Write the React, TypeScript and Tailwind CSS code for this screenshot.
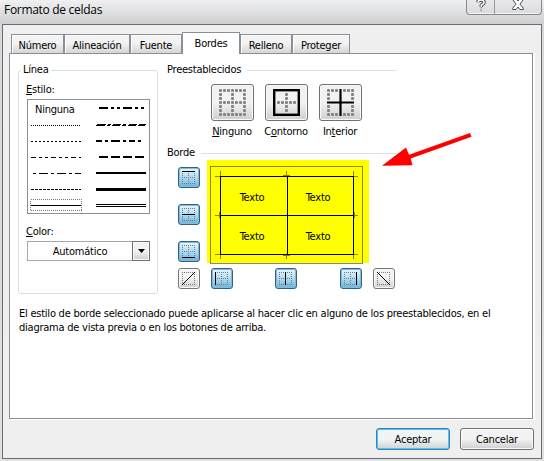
import type { ReactNode } from "react";

const uiFont = "font-['DejaVu_Sans_Condensed','DejaVu_Sans',sans-serif] [font-stretch:condensed] tracking-[-0.235px]";

function Tab({ label, width, active = false }: { label: string; width: string; active?: boolean }) {
  return (
    <div
      className={`${width} flex shrink-0 justify-center border border-b-0 border-[#8b8e99] ${
        active ? "h-[22px] bg-white pt-[4px]" : "mb-px h-[19px] bg-linear-to-b from-[#f3f3f3] from-45% to-[#d5d5d5] pt-[4px] shadow-[inset_1px_1px_0_#fff]"
      }`}
    >
      {label}
    </div>
  );
}

type Kind = "none" | "outline" | "inside";

function PresetIcon({ kind }: { kind: Kind }) {
  const dots: ReactNode[] = [];
  for (let r = 0; r < 7; r++) {
    for (let c = 0; c < 7; c++) {
      const edge = r === 0 || r === 6 || c === 0 || c === 6;
      const mid = r === 3 || c === 3;
      const show = kind === "none" ? edge || mid : kind === "outline" ? mid && !edge : edge && !mid;
      if (show) dots.push(<rect key={`${r}-${c}`} x={c * 4 + 1} y={r * 4 + 1} width="3" height="3" rx="1" fill="#858585" />);
    }
  }
  return (
    <svg width="29" height="29" viewBox="0 0 29 29">
      {dots}
      {kind === "outline" && <rect x="2.2" y="2.2" width="24.6" height="24.6" fill="none" stroke="#000" strokeWidth="2.4" />}
      {kind === "inside" && <path d="M14.5 1v27M1 14.5h27" stroke="#000" strokeWidth="2.2" />}
    </svg>
  );
}

function Preset({ kind, children }: { kind: Kind; children: ReactNode }) {
  return (
    <div className="flex w-[54px] flex-col items-center">
      <div className="flex h-[37px] w-[43px] items-center justify-center rounded-[3px] border border-[#707070] bg-linear-to-b from-[#f2f2f2] from-50% to-[#cfcfcf] shadow-[inset_0_0_0_1px_#fafafa]">
        <PresetIcon kind={kind} />
      </div>
      <span className="mt-[4px] whitespace-nowrap">{children}</span>
    </div>
  );
}

function SideButton({ line, blue = true }: { line: string; blue?: boolean }) {
  return (
    <div
      className={`flex h-[21px] w-[22px] shrink-0 items-center justify-center rounded-[3px] border ${
        blue
          ? "border-[#2c628b] bg-linear-to-b from-[#e1f2fb] from-10% via-[#a9d7ef] via-55% to-[#68b3db] shadow-[inset_0_0_0_1px_#8fb8d0]"
          : "border-[#777] bg-linear-to-b from-[#f4f4f4] from-45% to-[#cfcfcf] shadow-[inset_0_0_0_1px_#fafafa]"
      }`}
    >
      <svg width="14" height="13" viewBox="0 0 14 13" shapeRendering="crispEdges">
        <path
          d={blue ? "M0 .5h13M0 6.5h13M0 12.5h13M.5 0v13M6.5 0v13M12.5 0v13" : "M0 .5h13M0 12.5h13M.5 0v13M12.5 0v13"}
          stroke="#737b82"
          strokeDasharray="1 1"
        />
        <path d={line} stroke="#000" strokeWidth="1" shapeRendering={blue ? "crispEdges" : "auto"} />
      </svg>
    </div>
  );
}

function LineStyles() {
  return (
    <svg width="120" height="113" viewBox="28 100 120 113" shapeRendering="crispEdges" stroke="#000">
      <path d="M31 125.5h50" strokeDasharray="1 1" />
      <path d="M31 141.5h50" strokeDasharray="2 2" />
      <path d="M31 157.5h50" strokeDasharray="5 3 3 3 3 3" />
      <path d="M33 173.5h48" strokeDasharray="3 3 9 3" />
      <path d="M31 189.5h50" strokeDasharray="3 1" />
      <path d="M31 205.5h50" />
      <path d="M99 108h46" strokeWidth="2" strokeDasharray="9 3 3 3 3 3" />
      <path d="M96 125.5h9M107 125.5h3M112 125.5h8M122 125.5h4M128 125.5h8M138 125.5h7" />
      <path d="M97 124.5h9M108 124.5h3M113 124.5h8M123 124.5h3M129 124.5h8M139 124.5h7" />
      <path d="M96 141h48" strokeWidth="2" strokeDasharray="6 3 3 3 9 3 3 3" />
      <path d="M99 157h45" strokeWidth="2" strokeDasharray="9 3" />
      <path d="M96 173h50" strokeWidth="2" />
      <path d="M96 189.5h50" strokeWidth="3" />
      <path d="M96 204.5h50M96 206.5h50" />
      <rect x="30.5" y="199.5" width="51" height="11" fill="none" stroke="#777" strokeDasharray="1 1" />
    </svg>
  );
}

function Preview() {
  return (
    <div className="relative h-[103px] w-[162px] bg-[#ff0]">
      <svg className="absolute inset-0" width="162" height="103" viewBox="207 160 162 103" shapeRendering="crispEdges" fill="none">
        <path d="M210.500 263V166.500h152V263" stroke="#878700" />
        <path
          d="M215 176.5h5M220.5 171v5M215 215.5h5M219.5 212v6M215 254.5h5M220.5 254v5M283 175.5h7M286.5 171v5M283 255.5h7M286.5 254v5M353 176.5h5M353.5 171v5M354 215.5h4M354.5 212v6M353 254.5h5M353.5 254v5"
          stroke="#878700"
        />
        <path d="M220 176.5h134M220 215.5h134M220 254.5h134M220.5 176v79M287.5 176v79M353.5 176v79" stroke="#000" />
      </svg>
      <div className="relative grid h-full grid-cols-[66px_66px] grid-rows-[39px_39px] place-items-center pt-[18px] pl-[12px]">
        <span>Texto</span>
        <span>Texto</span>
        <span>Texto</span>
        <span>Texto</span>
      </div>
      <div className="absolute top-[103px] left-[3px] h-px w-[153px] bg-[#85878d]" />
    </div>
  );
}

function Heading({ children }: { children: ReactNode }) {
  return (
    <div className="flex h-[14px] w-[229px] items-center gap-[6px]">
      <span>{children}</span>
      <div className="h-px flex-1 bg-[#d5dfe5]" />
    </div>
  );
}

export default function App() {
  return (
    <div className={`relative flex h-[461px] w-[544px] flex-col overflow-hidden bg-linear-to-b from-[#d6d7d9] to-[#e0e0e0] text-[11px] leading-[14px] text-black ${uiFont}`}>
      <header className="flex h-[24px] shrink-0 justify-between bg-linear-to-b from-[#f0f0f1] via-[#dfe0e2] via-50% to-[#cbcdcf]">
        <h1 className="ml-[4px] font-['Open_Sans','Noto_Sans',sans-serif] text-[12px] leading-[20px] tracking-[-0.3px] [font-stretch:normal]">Formato de celdas</h1>
        <div className="mr-[2px] flex h-[15px] w-[76px] rounded-b-[4px] border border-t-0 border-[#84868a] bg-linear-to-b from-[#e9e9ea] to-[#d9dadc] shadow-[inset_0_-1px_0_#f5f5f5]">
          <div className="flex w-[28px] justify-center border-r border-[#999]">
            <svg width="12" height="12" viewBox="0 0 12 12" fill="none" strokeLinejoin="round">
              <path d="M3 2.200Q3 0 6 0T9 2.200Q9 4 6.300 5V7M5.700 9h1.200" stroke="#4a4d5c" strokeWidth="3.400" />
              <path d="M3 2.200Q3 0 6 0T9 2.200Q9 4 6.300 5V7M5.700 9h1.200" stroke="#fff" strokeWidth="1.500" />
            </svg>
          </div>
          <div className="flex flex-1 justify-center">
            <svg width="12" height="11" viewBox="0 0 12 11" fill="none">
              <path d="M.7-1.500h3.200L6 1 8.100-1.500h3.200v1L8 4.200l3.300 4v1.300H8L6 7 4 9.500H.700V8.200L4 4.200.700-.500z" fill="#fff" stroke="#4a4d5c" />
            </svg>
          </div>
        </div>
      </header>

      <main className="ml-[2px] flex h-[435px] w-[540px] shrink-0 flex-col border border-[#696b6e] bg-[#efefef]">
        <nav className="z-10 flex h-[29px] items-end pl-[8px]">
          <Tab label="Número" width="w-[53px]" />
          <Tab label="Alineación" width="w-[66px]" />
          <Tab label="Fuente" width="w-[52px]" />
          <Tab label="Bordes" width="w-[58px]" active />
          <Tab label="Relleno" width="w-[52px]" />
          <Tab label="Proteger" width="w-[58px]" />
        </nav>

        <section className="-mt-px ml-[6px] h-[366px] w-[524px] shrink-0 border border-[#8b8e99] bg-white shadow-[2px_1px_0_#fff]">
          <div className="flex h-[240px]">
            <fieldset className="mt-[9px] ml-[8px] h-[231px] w-[140px] rounded-[3px] border border-[#d5dfe5] pl-[8px]">
              <legend className="-ml-[6px] px-[2px]">Línea</legend>
              <p className="-ml-px mt-[6px]"><u>E</u>stilo:</p>
              <div className="relative mt-[2px] h-[115px] w-[123px] border border-[#8b8e99]">
                <LineStyles />
                <span className="absolute top-[3px] left-[7px]">Ninguna</span>
              </div>
              <p className="-ml-px mt-[11px]"><u>C</u>olor:</p>
              <div className="mt-[2px] flex h-[20px] w-[123px] border border-[#a5a7ad]">
                <span className="flex-1 pt-[3px] text-center">Automático</span>
                <div className="-my-px -mr-px flex w-[18px] items-center justify-center border border-[#707070] bg-linear-to-b from-[#f2f2f2] from-50% to-[#cfcfcf] shadow-[inset_0_0_0_1px_#fafafa]">
                  <svg width="7" height="4" viewBox="0 0 7 4"><path d="M0 0h7L3.500 4z" /></svg>
                </div>
              </div>
            </fieldset>

            <div className="ml-[9px] flex w-[229px] flex-col pt-[9px]">
              <Heading>Preestablecidos</Heading>
              <div className="mt-[7px] ml-[38px] flex">
                <Preset kind="none"><u>N</u>inguno</Preset>
                <Preset kind="outline">C<u>o</u>ntorno</Preset>
                <Preset kind="inside">In<u>t</u>erior</Preset>
              </div>
              <div className="mt-[7px]"><Heading>Borde</Heading></div>
              <div className="flex">
                <div className="mt-[7px] ml-[11px] flex w-[29px] flex-col gap-[16px]">
                  <SideButton line="M0 .5h13" />
                  <SideButton line="M0 6.500h13" />
                  <SideButton line="M0 12.500h13" />
                </div>
                <Preview />
              </div>
              <div className="mt-[5px] ml-[11px] flex">
                <SideButton line="M0 13L13 0" blue={false} />
                <div className="ml-[11px] flex flex-1">
                  <SideButton line="M.5 0v13" />
                  <div className="ml-[42px]"><SideButton line="M6.500 0v13" /></div>
                  <div className="ml-[43px]"><SideButton line="M12.500 0v13" /></div>
                  <div className="ml-[11px]"><SideButton line="M0 0L13 13" blue={false} /></div>
                </div>
              </div>
            </div>
          </div>
          <p className="mt-[13px] ml-[9px] whitespace-nowrap">
            El estilo de borde seleccionado puede aplicarse al hacer clic en alguno de los preestablecidos, en el
            <br />
            diagrama de vista previa o en los botones de arriba.
          </p>
        </section>

        <footer className="mt-[9px] mr-[7px] flex justify-end gap-[10px]">
          <button className="h-[22px] w-[74px] rounded-[3px] border border-[#3c7fb1] bg-linear-to-b from-[#f1f4f5] from-50% to-[#cdd4d7] pt-[2px] shadow-[inset_0_0_0_1px_#43c9f3]">Aceptar</button>
          <button className="h-[22px] w-[74px] rounded-[3px] border border-[#707070] bg-linear-to-b from-[#f2f2f2] from-50% to-[#cfcfcf] pt-[2px] shadow-[inset_0_0_0_1px_#fafafa]">Cancelar</button>
        </footer>
      </main>

      <svg className="absolute top-[130px] left-[380px] z-20" width="95" height="40" viewBox="380 130 95 40">
        <path d="M382 165.700L406 147.500l3 7.300L470 133l1.500 3.800L410.700 158.500l1.800 6.700z" fill="#f00" />
      </svg>
    </div>
  );
}
